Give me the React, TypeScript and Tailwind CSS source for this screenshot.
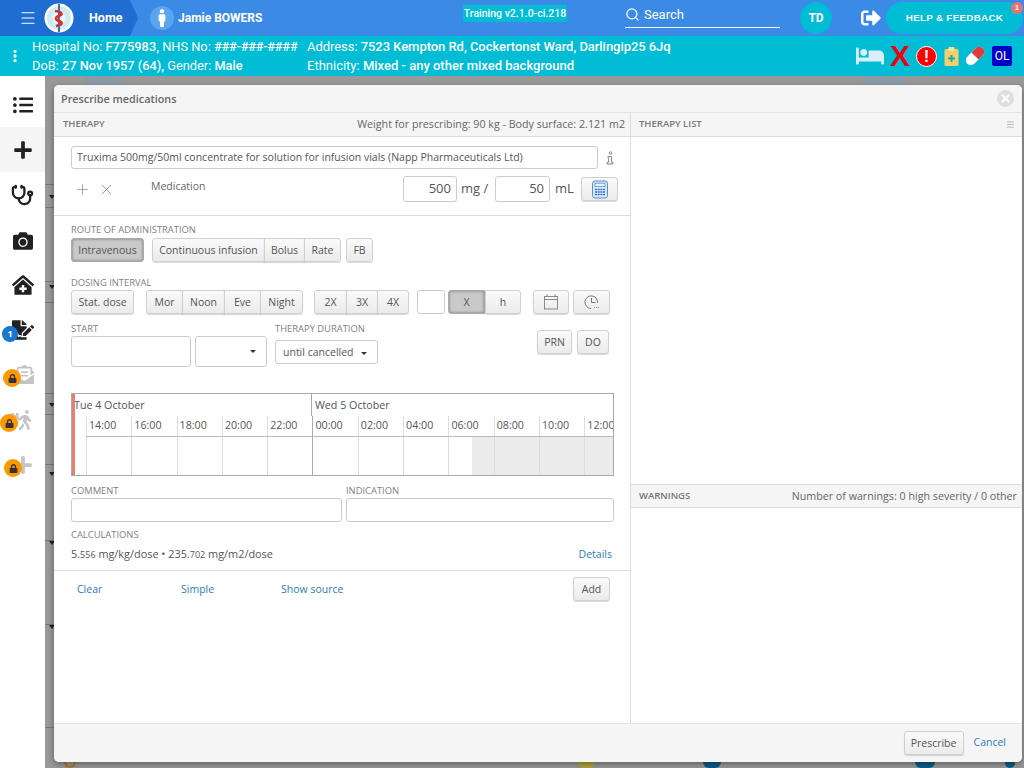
import React from "react";
import { FaListUl, FaPlus, FaCamera, FaClinicMedical, FaFileSignature, FaLock, FaWalking, FaBed, FaMale, FaSignOutAlt, FaEnvelopeOpenText, FaHome } from "react-icons/fa";
import { Stethoscope, Search, X, Plus, Menu, EllipsisVertical } from "lucide-react";

const ibtn = "h-6 flex items-center justify-center border border-[#d0d0d0] bg-gradient-to-b from-[#fafafa] to-[#ebebeb] text-[10.5px] text-[#555] shadow-[0_1px_1px_rgba(0,0,0,0.15)]";
const btn = ibtn + " pt-[2px]";
const label = "text-[9.4px] leading-[12px] text-[#808080]";
const input = "border border-[#ccc] rounded-[3px] bg-white";
const hours = ["14:00","16:00","18:00","20:00","22:00","00:00","02:00","04:00","06:00","08:00","10:00","12:00"];
const behindLines = [108, 131, 205, 226, 317, 338, 388, 464, 548, 651];
const behindArrows = [119, 209, 327, 396, 465, 549];

function Logo() {
  return (
    <svg width="30" height="30" viewBox="0 0 30 30" className="shrink-0">
      <circle cx="15" cy="15" r="14.5" fill="#fff" />
      <circle cx="15" cy="15" r="12" fill="#cfeaf3" />
      <circle cx="15" cy="15" r="6.5" fill="#eef8fb" />
      <rect x="14.2" y="1" width="1.6" height="28" fill="#1f4f8f" />
      <path d="M11 8 C19 9 19 12 15 13 C11 14 11 17 15 18 C19 19 19 22 12 23" fill="none" stroke="#d32f2f" strokeWidth="2.6" />
    </svg>
  );
}

function Locked({ children, offset }: { children: React.ReactNode; offset: string }) {
  return (
    <div className="relative h-[45px] flex items-center justify-center text-[#c4c4c4]">
      {children}
      <span className={"absolute top-[17px] w-[18px] h-[18px] rounded-full bg-[#ff9800] flex items-center justify-center text-[#333] text-[9px] " + offset}><FaLock /></span>
    </div>
  );
}

function CalcIcon() {
  return (
    <svg width="18" height="19" viewBox="0 0 18 19">
      <rect x="1.5" y="1" width="15" height="17" rx="2.5" fill="#d9e6f7" stroke="#5a8fd2" />
      <rect x="4" y="3.2" width="10" height="3.4" fill="#f2f6fc" stroke="#5a8fd2" strokeWidth="0.8" />
      <path d="M4 9.5h10M4 12h10M4 14.5h10" stroke="#3a76c4" strokeWidth="1.4" strokeDasharray="2 0.7" />
    </svg>
  );
}

function InfoIcon() {
  return (
    <svg width="10" height="14" viewBox="0 0 10 14" fill="none" stroke="#888" strokeWidth="1">
      <circle cx="5.5" cy="2" r="1.3" />
      <path d="M3 5.5h3.5v6H8v1.5H2v-1.5h1.6v-4.5H3z" />
    </svg>
  );
}

function CalendarIcon() {
  return (
    <svg width="16" height="16" viewBox="0 0 16 16" fill="none" stroke="#888" strokeWidth="1">
      <rect x="1.5" y="2.5" width="13" height="12.5" />
      <path d="M1.5 5.5h13M4 0.5v2M12 0.5v2" />
    </svg>
  );
}

function ClockIcon() {
  return (
    <svg width="16" height="16" viewBox="0 0 16 16" fill="none" stroke="#777" strokeWidth="1">
      <path d="M13.5 9A6.3 6.3 0 1 0 7 14.5" />
      <path d="M7.5 4v4.5h4" />
      <path d="M10 13.5h.8M12 13.5h.8M14 13.5h.8" strokeWidth="1.2" />
    </svg>
  );
}

export default function App() {
  return (
    <div className="w-[1024px] h-[768px] overflow-hidden flex flex-col font-['Open_Sans',sans-serif] bg-[#999]">
      {/* top bar */}
      <header className="h-9 shrink-0 flex items-center bg-[#3b8be6] text-white font-['Roboto',sans-serif]">
        <div className="w-[138px] h-9 flex items-center bg-[#1f6dd1] [clip-path:polygon(0_0,130px_0,138px_18px,130px_36px,0_36px)]">
          <Menu size={18} strokeWidth={1.5} className="ml-[19px]" />
          <div className="ml-[7px]"><Logo /></div>
          <span className="ml-[15px] text-[12.5px] font-bold">Home</span>
        </div>
        <span className="ml-3 w-6 h-6 rounded-full bg-[#5aa5f0] flex items-center justify-center text-[18px]"><FaMale /></span>
        <span className="ml-1 text-[12px] font-bold w-[285px]">Jamie BOWERS</span>
        <span className="self-start mt-[5px] w-[104px] h-[17px] bg-[#00bcd4] text-[10.5px] font-medium leading-[17px] text-center whitespace-nowrap">Training v2.1.0-ci.218</span>
        <div className="self-start ml-[58px] w-[155px] h-[28px] pt-[2px] border-b border-white flex items-center gap-[4px] text-[13px]">
          <Search size={15} strokeWidth={2} /> Search
        </div>
        <span className="ml-5 w-8 h-8 rounded-full bg-[#00bcd4] flex items-center justify-center text-[12px] font-bold">TD</span>
        <FaSignOutAlt className="ml-[29px] text-[20px]" />
        <div className="relative ml-[5px] w-[137px] h-8 rounded-full bg-[#00bcd4] flex items-center justify-center text-[9.8px] font-bold tracking-[0.3px] font-['Liberation_Sans',sans-serif]">
          HELP &amp; FEEDBACK
          <span className="absolute top-0 right-0 w-3 h-3 rounded-full bg-[#e57373] text-[7px] leading-3 text-center">1</span>
        </div>
      </header>

      {/* patient banner */}
      <div className="h-10 shrink-0 flex items-center bg-[#00bcd4] text-white text-[13px] leading-[19px] font-['Roboto',sans-serif]">
        <EllipsisVertical size={16} strokeWidth={3} className="ml-[7px] w-[16px]" />
        <div className="ml-[9px] w-[275px] whitespace-nowrap text-[12.8px]">
          <div>Hospital No: <b className="font-medium">F775983,</b> NHS No: <b className="font-medium tracking-[-0.2px]">###-###-####</b></div>
          <div>DoB: <b className="font-medium">27 Nov 1957 (64),</b> Gender: <b className="font-medium">Male</b></div>
        </div>
        <div className="whitespace-nowrap w-[549px]">
          <div className="tracking-[-0.05px]">Address: <b className="font-medium">7523 Kempton Rd, Cockertonst Ward, Darlingip25 6Jq</b></div>
          <div>Ethnicity: <b className="font-medium">Mixed - any other mixed background</b></div>
        </div>
        <div className="flex items-center text-[#e3f2fd]">
          <FaBed className="text-[28px] text-[#dbeef5]" />
          <span className="ml-[7px] text-[#e30613] text-[30px] font-bold leading-none font-['Liberation_Sans',sans-serif] w-[18px] flex justify-center">X</span>
          <span className="ml-[7px] w-[21px] h-[21px] rounded-full bg-[#f00] border border-white text-white text-[16px] font-bold flex items-center justify-center">!</span>
          <svg width="15" height="19" viewBox="0 0 15 19" className="ml-[7px]">
            <rect x="0.5" y="2" width="14" height="17" rx="1.5" fill="#f2d06b" />
            <rect x="4.5" y="0" width="6" height="4" rx="1" fill="#f8e39c" />
            <path d="M7.5 8v7M4 11.5h7" stroke="#1aa7b8" strokeWidth="2" />
          </svg>
          <svg width="20" height="20" viewBox="0 0 20 20" className="ml-[6px]">
            <g transform="rotate(-45 10 10)">
              <rect x="-1" y="5" width="22" height="10" rx="5" fill="#fff" />
              <path d="M10 5h6a5 5 0 0 1 0 10h-6z" fill="#e53935" />
            </g>
          </svg>
          <span className="ml-[7px] w-5 h-5 rounded-[2px] bg-[#0000c8] text-white text-[12px] flex items-center justify-center">OL</span>
        </div>
      </div>

      <div className="flex-1 flex min-h-0">
        {/* sidebar */}
        <nav className="w-[45px] shrink-0 bg-white flex flex-col text-[#212121] pt-[7px]">
          <div className="h-[44px] flex items-center justify-center text-[20px]"><FaListUl /></div>
          <div className="h-[45px] flex items-center justify-center text-[20px] bg-[#f5f5f5]"><FaPlus /></div>
          <div className="h-[46px] flex items-center justify-center"><Stethoscope size={23} strokeWidth={2.4} /></div>
          <div className="h-[45px] flex items-center justify-center text-[20px]"><FaCamera /></div>
          <div className="h-[44px] flex items-center justify-center text-[22px]"><FaClinicMedical /></div>
          <div className="relative h-[45px] flex items-center justify-center text-[22px]">
            <FaFileSignature />
            <span className="absolute left-[2px] top-[19px] w-4 h-4 rounded-full bg-[#1976d2] text-white text-[9px] font-bold leading-4 text-center">1</span>
          </div>
          <Locked offset="left-[3px]"><FaEnvelopeOpenText className="text-[19px] ml-[4px]" /></Locked>
          <Locked offset="left-0"><FaHome className="text-[17px] ml-[-6px]" /><FaWalking className="text-[20px] ml-[-6px]" /></Locked>
          <Locked offset="left-[4px]"><FaPlus className="text-[20px]" /></Locked>
        </nav>

        {/* dimmed page behind the dialog */}
        <main className="relative flex-1 pl-[9px] pt-[9px] bg-[#999]">
          <span className="absolute left-[40px] top-0 w-[37px] h-[9px] bg-[#8d9aa5]" />
          <span className="absolute left-[818px] top-0 w-[42px] h-[9px] bg-[#8d9aa5]" />
          {behindLines.map((y) => (
            <span key={y} className="absolute left-0 w-[9px] h-px bg-[#777]" style={{ top: y }} />
          ))}
          {behindArrows.map((y) => (
            <span key={y} className="absolute left-[4px] border-x-[3.5px] border-x-transparent border-t-[4px] border-t-[#222]" style={{ top: y }} />
          ))}
          <span className="absolute left-[19px] bottom-0 w-[12px] h-[6px] rounded-b-full border-2 border-t-0 border-[#a97a2c]" />
          <span className="absolute left-[533px] bottom-0 w-[17px] h-[6px] rounded-b-md bg-[#b5a53c]" />
          <span className="absolute left-[658px] bottom-0 w-[18px] h-[6px] rounded-b-md bg-[#0d5c8c]" />
          <span className="absolute left-[870px] bottom-0 w-[20px] h-[6px] rounded-b-md bg-[#0d5c8c]" />
          <span className="absolute left-[960px] bottom-0 w-[10px] h-[6px] rounded-b-md bg-[#0d5c8c]" />

          {/* dialog */}
          <section className="relative w-[968px] h-[677px] rounded-[5px] bg-white shadow-[0_2px_6px_rgba(0,0,0,0.4)] flex flex-col overflow-hidden text-[#555]">
            <div className="h-[28px] shrink-0 bg-[#f5f5f5] border-b border-[#e3e3e3] flex items-center justify-between pl-[7px] pr-[8px]">
              <span className="text-[10.8px] font-semibold text-[#666] pt-[2px]">Prescribe medications</span>
              <span className="w-[17px] h-[17px] rounded-full bg-[#dedede] text-white flex items-center justify-center"><X size={13} strokeWidth={3.5} /></span>
            </div>
            <div className="flex-1 flex min-h-0">
              {/* left column */}
              <div className="w-[577px] shrink-0 border-r border-[#ddd] flex flex-col">
                <div className="h-6 shrink-0 bg-[#f5f5f5] border-b border-[#ddd] flex items-center justify-between pl-[9px] pr-[5px]">
                  <span className="text-[9.5px] font-semibold text-[#777]">THERAPY</span>
                  <span className="text-[10.7px] text-[#666]">Weight for prescribing: 90 kg - Body surface: 2.121 m2</span>
                </div>
                <div className="h-[79px] shrink-0 border-b border-[#ddd] pl-[17px] pt-[9px]">
                  <div className="flex items-center">
                    <div className={input + " w-[527px] h-[23px] flex items-center pl-[5px] text-[10.5px] text-[#555] whitespace-nowrap"}>Truxima 500mg/50ml concentrate for solution for infusion vials (Napp Pharmaceuticals Ltd)</div>
                    <span className="ml-[7px] flex"><InfoIcon /></span>
                  </div>
                  <div className="flex items-center mt-[7px] h-[26px]">
                    <Plus size={17} strokeWidth={1} className="ml-[3px] text-[#888]" />
                    <X size={17} strokeWidth={1} className="ml-[7px] text-[#777]" />
                    <span className="ml-[36px] text-[10.5px] text-[#666] -mt-[4px] w-[252px]">Medication</span>
                    <div className={input + " w-[54px] h-[26px] flex items-center justify-end pr-[5px] text-[13px]"}>500</div>
                    <span className="ml-[4px] text-[13px] w-[34px]">mg /</span>
                    <div className={input + " w-[55px] h-[26px] flex items-center justify-end pr-[5px] text-[13px]"}>50</div>
                    <span className="ml-[5px] text-[13px] w-[26px]">mL</span>
                    <div className={ibtn + " rounded-[3px] w-[37px]"}><CalcIcon /></div>
                  </div>
                </div>

                <div className="pl-[17px] pt-[8px]">
                  <div className={label}>ROUTE OF ADMINISTRATION</div>
                  <div className="flex mt-[2px]">
                    <div className="h-6 w-[73px] pt-[2px] flex items-center justify-center rounded-[3px] bg-[#c9c9c9] border border-[#aaa] shadow-[inset_0_0_3px_rgba(0,0,0,0.45)] text-[10.5px]">Intravenous</div>
                    <div className="flex ml-[8px]">
                      <div className={btn + " rounded-l-[3px] w-[113px]"}>Continuous infusion</div>
                      <div className={btn + " w-[41px] -ml-px"}>Bolus</div>
                      <div className={btn + " rounded-r-[3px] w-[37px] -ml-px"}>Rate</div>
                    </div>
                    <div className={btn + " rounded-[3px] w-[27px] ml-[5px]"}>FB</div>
                  </div>

                  <div className={label + " mt-[15px]"}>DOSING INTERVAL</div>
                  <div className="flex mt-[1px]">
                    <div className={btn + " rounded-[3px] w-[63px]"}>Stat. dose</div>
                    <div className="flex ml-[12px]">
                      <div className={btn + " rounded-l-[3px] w-[37px]"}>Mor</div>
                      <div className={btn + " w-[43px] -ml-px"}>Noon</div>
                      <div className={btn + " w-[37px] -ml-px"}>Eve</div>
                      <div className={btn + " rounded-r-[3px] w-[43px] -ml-px"}>Night</div>
                    </div>
                    <div className="flex ml-[11px]">
                      <div className={btn + " rounded-l-[3px] w-[33px]"}>2X</div>
                      <div className={btn + " w-[32px] -ml-px"}>3X</div>
                      <div className={btn + " rounded-r-[3px] w-[32px] -ml-px"}>4X</div>
                    </div>
                    <div className={input + " w-[28px] h-6 ml-[8px]"} />
                    <div className="flex ml-[3px]">
                      <div className="h-6 w-[37px] pt-[2px] flex items-center justify-center rounded-l-[3px] bg-[#c9c9c9] border border-[#aaa] shadow-[inset_0_0_3px_rgba(0,0,0,0.45)] text-[10.5px]">X</div>
                      <div className={btn + " rounded-r-[3px] w-[36px]"}>h</div>
                    </div>
                    <div className={ibtn + " rounded-[3px] w-[36px] ml-[12px]"}><CalendarIcon /></div>
                    <div className={ibtn + " rounded-[3px] w-[37px] ml-[4px]"}><ClockIcon /></div>
                  </div>

                  <div className="flex mt-[9px] h-[52px]">
                    <div>
                      <div className={label}>START</div>
                      <div className="flex mt-[1px]">
                        <div className={input + " w-[120px] h-[31px]"} />
                        <div className={input + " w-[72px] h-[31px] ml-[4px] flex items-center justify-end pr-[10px]"}>
                          <span className="border-x-[3.5px] border-x-transparent border-t-[3.5px] border-t-[#333]" />
                        </div>
                      </div>
                    </div>
                    <div className="ml-[8px]">
                      <div className={label}>THERAPY DURATION</div>
                      <div className={input + " w-[103px] h-6 mt-[5px] pt-[2px] flex items-center pl-[7px] text-[10.5px] whitespace-nowrap"}>
                        until cancelled
                        <span className="ml-[7px] border-x-[3.5px] border-x-transparent border-t-[3.5px] border-t-[#333]" />
                      </div>
                    </div>
                    <div className="flex ml-[159px] mt-[7px] gap-[5px]">
                      <div className={btn + " rounded-[3px] w-[35px]"}>PRN</div>
                      <div className={btn + " rounded-[3px] w-[32px]"}>DO</div>
                    </div>
                  </div>

                  {/* timeline */}
                  <div className="relative mt-[18px] w-[543px] h-[83px] border border-[#aaa] overflow-hidden text-[10.7px] text-[#555]">
                    <span className="absolute left-0 top-0 bottom-0 w-[3px] bg-[#e57f70]" />
                    <div className="flex h-[22px] items-center">
                      <span className="w-[240px] pl-[2px] border-r border-[#aaa] h-full flex items-center">Tue 4 October</span>
                      <span className="pl-[3px]">Wed 5 October</span>
                    </div>
                    <div className="flex h-[21px] border-b border-[#bbb] ml-[14px]">
                      {hours.map((h) => (
                        <span key={h} className={"w-[45.3px] shrink-0 pl-[2px] whitespace-nowrap border-l leading-[18px] " + (h === "00:00" ? "border-[#aaa]" : "border-[#ddd]")}>{h}</span>
                      ))}
                    </div>
                    <div className="flex h-[39px] ml-[14px]">
                      {hours.map((h, i) => (
                        <span key={h} className={"w-[45.3px] shrink-0 border-l " + (h === "00:00" ? "border-[#aaa] " : "border-[#ddd] ") + (i > 8 ? "bg-[#ebebeb]" : i === 8 ? "bg-gradient-to-r from-white from-50% to-[#ebebeb] to-50%" : "")} />
                      ))}
                    </div>
                  </div>

                  <div className="flex mt-[9px]">
                    <div className="w-[275px]">
                      <div className={label}>COMMENT</div>
                      <div className={input + " w-[271px] h-6 mt-[1px]"} />
                    </div>
                    <div>
                      <div className={label}>INDICATION</div>
                      <div className={input + " w-[268px] h-6 mt-[1px]"} />
                    </div>
                  </div>

                  <div className={label + " mt-[7px]"}>CALCULATIONS</div>
                  <div className="flex items-center justify-between w-[541px] mt-[7px] text-[10.9px] h-[14px]">
                    <span className="mb-[2px]">5.<span className="text-[9px]">556</span> mg/kg/dose • 235.<span className="text-[9px]">702</span> mg/m2/dose</span>
                    <span className="text-[#337ab7] text-[10.5px]">Details</span>
                  </div>
                </div>

                <div className="mt-[8px] border-t border-[#ddd] h-[38px] flex items-center pl-[23px] text-[10.5px] text-[#337ab7]">
                  <span className="w-[104px]">Clear</span>
                  <span className="w-[100px]">Simple</span>
                  <span className="w-[292px]">Show source</span>
                  <div className={btn + " rounded-[3px] w-[37px] mb-[2px]"}>Add</div>
                </div>
              </div>

              {/* right column */}
              <div className="flex-1 flex flex-col min-w-0">
                <div className="h-6 shrink-0 bg-[#f5f5f5] border-b border-[#ddd] flex items-center justify-between pl-[8px] pr-[7px]">
                  <span className="text-[9.5px] font-semibold text-[#777]">THERAPY LIST</span>
                  <span className="text-[#888]"><Menu size={9} strokeWidth={1.5} /></span>
                </div>
                <div className="h-[347px] shrink-0" />
                <div className="h-6 shrink-0 bg-[#f5f5f5] border-y border-[#ddd] flex items-center justify-between pl-[8px] pr-[5px]">
                  <span className="text-[9.5px] font-semibold text-[#777]">WARNINGS</span>
                  <span className="text-[10.7px] text-[#666]">Number of warnings: 0 high severity / 0 other</span>
                </div>
              </div>
            </div>
            <div className="h-[39px] shrink-0 bg-[#f5f5f5] border-t border-[#e3e3e3] flex items-center justify-end pr-[16px]">
              <div className={btn + " rounded-[3px] w-[60px]"}>Prescribe</div>
              <span className="ml-[10px] text-[10.5px] text-[#337ab7]">Cancel</span>
            </div>
          </section>
        </main>
      </div>
    </div>
  );
}
